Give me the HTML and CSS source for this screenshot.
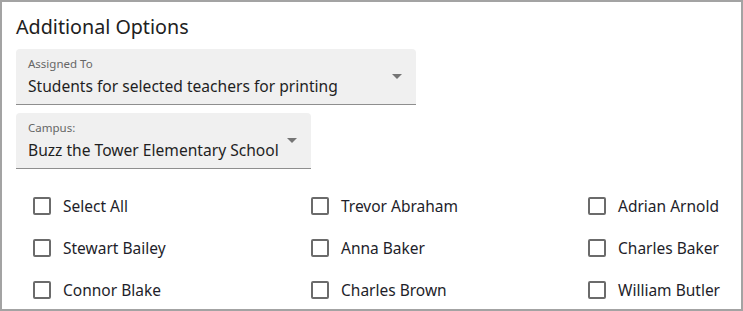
FILE: index.html
```html
<!DOCTYPE html>
<html>
<head>
<meta charset="utf-8">
<link rel="stylesheet" href="styles.css">
</head>
<body>
<div class="panel">
  <h2 class="title">Additional Options</h2>
  <div class="select select-wide">
    <div class="select-label">Assigned To</div>
    <div class="select-value">Students for selected teachers for printing</div>
    <svg class="arrow" viewBox="0 0 24 24" width="24" height="24"><path d="M7 10l5 5 5-5z"/></svg>
  </div>
  <div class="select select-auto">
    <div class="select-label">Campus:</div>
    <div class="select-value">Buzz the Tower Elementary School</div>
    <svg class="arrow" viewBox="0 0 24 24" width="24" height="24"><path d="M7 10l5 5 5-5z"/></svg>
  </div>
  <div class="checks">
    <label class="check"><span class="box"></span><span class="check-text">Select All</span></label>
    <label class="check"><span class="box"></span><span class="check-text">Trevor Abraham</span></label>
    <label class="check"><span class="box"></span><span class="check-text">Adrian Arnold</span></label>
    <label class="check"><span class="box"></span><span class="check-text">Stewart Bailey</span></label>
    <label class="check"><span class="box"></span><span class="check-text">Anna Baker</span></label>
    <label class="check"><span class="box"></span><span class="check-text">Charles Baker</span></label>
    <label class="check"><span class="box"></span><span class="check-text">Connor Blake</span></label>
    <label class="check"><span class="box"></span><span class="check-text">Charles Brown</span></label>
    <label class="check"><span class="box"></span><span class="check-text">William Butler</span></label>
  </div>
</div>
</body>
</html>
```
FILE: styles.css
```css
html, body {
  margin: 0;
  padding: 0;
  background: #ffffff;
}
body {
  font-family: "Noto Sans", "DejaVu Sans", sans-serif;
  color: #212121;
}
.panel {
  box-sizing: border-box;
  width: 743px;
  height: 311px;
  border: 2px solid #a3a3a3;
  overflow: hidden;
  padding: 0 14px;
  display: flex;
  flex-direction: column;
  align-items: flex-start;
}
.panel > * {
  flex-shrink: 0;
}
.title {
  margin: 12px 0 9px;
  font-size: 19.7px;
  font-weight: 400;
  line-height: 26px;
  color: #212121;
}
.select {
  position: relative;
  box-sizing: border-box;
  height: 56px;
  background: #f0f0f0;
  border-bottom: 1px solid #8e8e8e;
  border-radius: 4px 4px 0 0;
  padding: 8px 32px 0 12px;
}
.select-wide {
  width: 400px;
}
.select-auto {
  margin-top: 8px;
}
.select-label {
  font-size: 11.5px;
  line-height: 14px;
  color: #666666;
}
.select-value {
  margin-top: 5px;
  font-size: 15.6px;
  line-height: 20px;
  white-space: nowrap;
  color: #1f1f1f;
}
.arrow {
  position: absolute;
  right: 7px;
  top: 15px;
  fill: #757575;
}
.checks {
  margin-top: 16px;
  padding-left: 17px;
  display: grid;
  grid-template-columns: 278px 277px auto;
  grid-auto-rows: 42px;
}
.check {
  display: flex;
  align-items: center;
  gap: 12px;
  font-size: 15.5px;
  color: #1e1e2a;
}
.box {
  box-sizing: border-box;
  width: 18px;
  height: 18px;
  border: 2px solid #6b6b6b;
  border-radius: 2px;
}
```
